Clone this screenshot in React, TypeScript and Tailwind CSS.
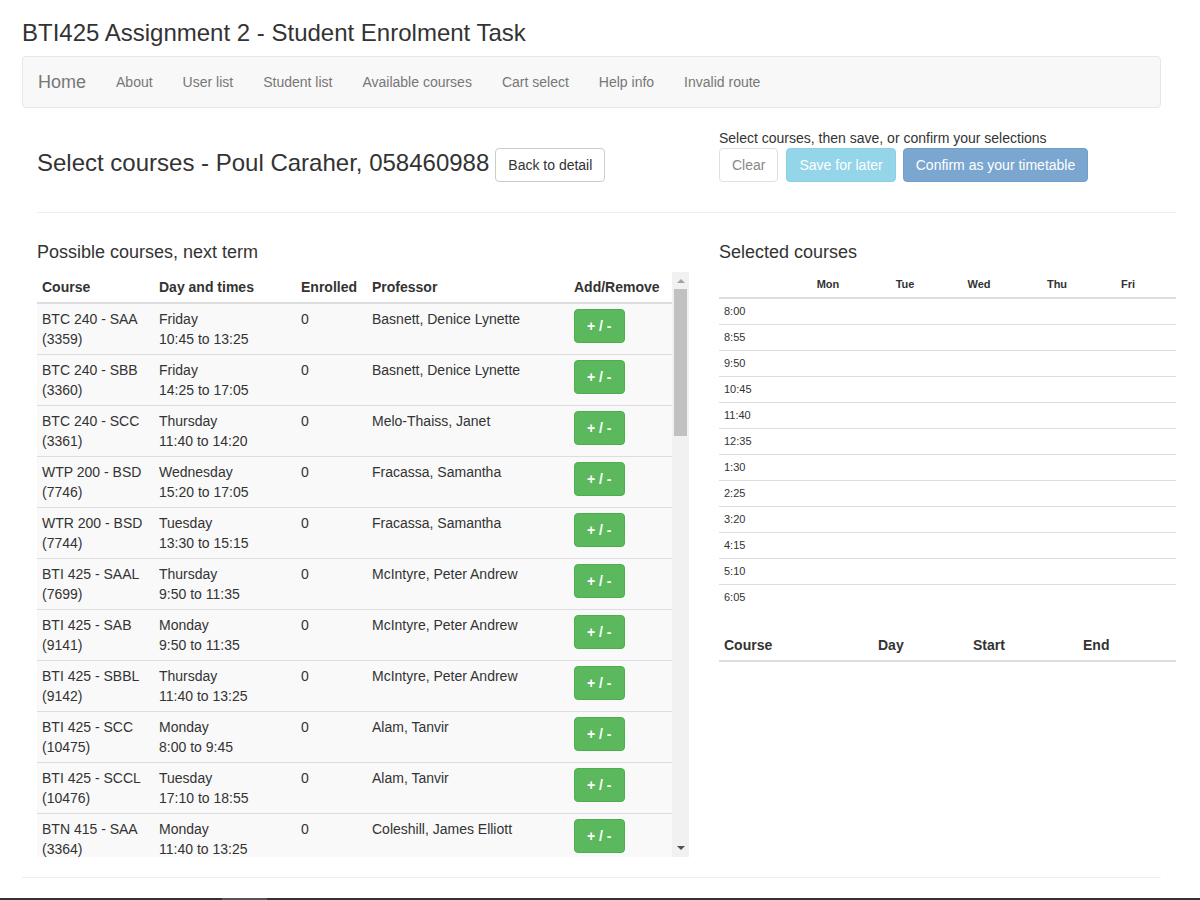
import React from "react";

type Course = {
  code: string;
  id: string;
  day: string;
  times: string;
  enrolled: number;
  prof: string;
};

const courses: Course[] = [
  { code: "BTC 240 - SAA", id: "3359", day: "Friday", times: "10:45 to 13:25", enrolled: 0, prof: "Basnett, Denice Lynette" },
  { code: "BTC 240 - SBB", id: "3360", day: "Friday", times: "14:25 to 17:05", enrolled: 0, prof: "Basnett, Denice Lynette" },
  { code: "BTC 240 - SCC", id: "3361", day: "Thursday", times: "11:40 to 14:20", enrolled: 0, prof: "Melo-Thaiss, Janet" },
  { code: "WTP 200 - BSD", id: "7746", day: "Wednesday", times: "15:20 to 17:05", enrolled: 0, prof: "Fracassa, Samantha" },
  { code: "WTR 200 - BSD", id: "7744", day: "Tuesday", times: "13:30 to 15:15", enrolled: 0, prof: "Fracassa, Samantha" },
  { code: "BTI 425 - SAAL", id: "7699", day: "Thursday", times: "9:50 to 11:35", enrolled: 0, prof: "McIntyre, Peter Andrew" },
  { code: "BTI 425 - SAB", id: "9141", day: "Monday", times: "9:50 to 11:35", enrolled: 0, prof: "McIntyre, Peter Andrew" },
  { code: "BTI 425 - SBBL", id: "9142", day: "Thursday", times: "11:40 to 13:25", enrolled: 0, prof: "McIntyre, Peter Andrew" },
  { code: "BTI 425 - SCC", id: "10475", day: "Monday", times: "8:00 to 9:45", enrolled: 0, prof: "Alam, Tanvir" },
  { code: "BTI 425 - SCCL", id: "10476", day: "Tuesday", times: "17:10 to 18:55", enrolled: 0, prof: "Alam, Tanvir" },
  { code: "BTN 415 - SAA", id: "3364", day: "Monday", times: "11:40 to 13:25", enrolled: 0, prof: "Coleshill, James Elliott" },
];

const times = ["8:00", "8:55", "9:50", "10:45", "11:40", "12:35", "1:30", "2:25", "3:20", "4:15", "5:10", "6:05"];

const navLinks = ["About", "User list", "Student list", "Available courses", "Cart select", "Help info", "Invalid route"];

function FakeScrollbar() {
  return (
    <div className="w-[17px] h-full bg-[#f1f1f1] flex flex-col items-center">
      <div className="h-[17px] w-full flex items-center justify-center">
        <svg width="8" height="5" viewBox="0 0 8 5">
          <path d="M0 5 L4 1 L8 5 Z" fill="#a3a3a3" />
        </svg>
      </div>
      <div className="w-[13px] h-[147px] bg-[#c1c1c1]" />
      <div className="flex-1" />
      <div className="h-[17px] w-full flex items-center justify-center">
        <svg width="8" height="5" viewBox="0 0 8 5">
          <path d="M0 0 L8 0 L4 4 Z" fill="#505050" />
        </svg>
      </div>
    </div>
  );
}

export default function App() {
  return (
    <div className="min-h-[900px] bg-white text-[#333] text-[14px] leading-[20px] font-['Liberation_Sans',Arial,sans-serif]">
      <div className="ml-[22px] w-[1139px] pt-[20px]">
        <h1 className="text-[24px] leading-[26.4px] font-normal mb-[10px]">
          BTI425 Assignment 2 - Student Enrolment Task
        </h1>

        <nav className="h-[52px] border border-[#e7e7e7] bg-[#f8f8f8] rounded-[4px] flex items-center">
          <a className="px-[15px] text-[18px] text-[#777]">Home</a>
          {navLinks.map((l) => (
            <a key={l} className="px-[15px] text-[#777]">
              {l}
            </a>
          ))}
        </nav>

        <div className="ml-[15px] w-[1139px] mt-[19px]">
          {/* header */}
          <div className="flex gap-[30px]">
            <div className="w-[652px] flex items-center mt-[21px] h-[34px]">
              <h2 className="text-[24px] leading-[26px] font-normal -mt-[4px]">
                Select courses - Poul Caraher, 058460988
              </h2>
              <button className="ml-[6px] px-[12px] py-[6px] border border-[#ccc] rounded-[4px] bg-white text-[#333]">
                Back to detail
              </button>
            </div>
            <div className="w-[457px] pt-[1px]">
              <p>Select courses, then save, or confirm your selections</p>
              <div className="flex">
                <button className="px-[12px] py-[6px] border border-[#e0e0e0] rounded-[4px] bg-white text-[#888]">
                  Clear
                </button>
                <button className="ml-[8px] px-[12px] py-[6px] border border-[#8bd0e6] rounded-[4px] bg-[#94d5ea] text-white">
                  Save for later
                </button>
                <button className="ml-[7px] px-[12px] py-[6px] border border-[#6f9fca] rounded-[4px] bg-[#7aa6cf] text-white">
                  Confirm as your timetable
                </button>
              </div>
            </div>
          </div>

          <hr className="mt-[30px] border-0 border-t border-[#eee]" />

          <div className="flex gap-[30px] items-start">
            {/* left column */}
            <div className="w-[652px]">
              <h3 className="text-[18px] leading-[20px] font-normal mt-[29px] mb-[10px]">
                Possible courses, next term
              </h3>
              <div className="h-[585px] flex overflow-hidden">
                <div className="w-[635px] overflow-hidden">
                  <table className="w-[635px] table-fixed border-collapse">
                    <colgroup>
                      <col className="w-[117px]" />
                      <col className="w-[142px]" />
                      <col className="w-[71px]" />
                      <col className="w-[202px]" />
                      <col className="w-[103px]" />
                    </colgroup>
                    <thead>
                      <tr>
                        {["Course", "Day and times", "Enrolled", "Professor", "Add/Remove"].map((h) => (
                          <th
                            key={h}
                            className="text-left font-bold p-[5px] border-b-2 border-[#ddd] align-bottom whitespace-nowrap"
                          >
                            {h}
                          </th>
                        ))}
                      </tr>
                    </thead>
                    <tbody>
                      {courses.map((c) => (
                        <tr key={c.id} className="bg-[#f9f9f9]">
                          <td className="p-[5px] border-t border-[#ddd] align-top">
                            {c.code}
                            <br />({c.id})
                          </td>
                          <td className="p-[5px] border-t border-[#ddd] align-top">
                            {c.day}
                            <br />
                            {c.times}
                          </td>
                          <td className="p-[5px] border-t border-[#ddd] align-top">{c.enrolled}</td>
                          <td className="p-[5px] border-t border-[#ddd] align-top">{c.prof}</td>
                          <td className="p-[5px] border-t border-[#ddd] align-top">
                            <button className="px-[12px] py-[6px] border border-[#4cae4c] rounded-[4px] bg-[#5cb85c] text-white font-bold">
                              + / -
                            </button>
                          </td>
                        </tr>
                      ))}
                    </tbody>
                  </table>
                </div>
                <FakeScrollbar />
              </div>
            </div>

            {/* right column */}
            <div className="w-[457px]">
              <h3 className="text-[18px] leading-[20px] font-normal mt-[29px] mb-[10px]">Selected courses</h3>
              <table className="w-[457px] table-fixed border-collapse text-[11px] leading-[15px]">
                <colgroup>
                  <col className="w-[69px]" />
                  <col className="w-[80px]" />
                  <col className="w-[74px]" />
                  <col className="w-[74px]" />
                  <col className="w-[82px]" />
                  <col className="w-[60px]" />
                  <col className="w-[18px]" />
                </colgroup>
                <thead>
                  <tr>
                    {["", "Mon", "Tue", "Wed", "Thu", "Fri", ""].map((d, i) => (
                      <th key={i} className="text-center font-bold py-[5px] border-b-2 border-[#ddd]">
                        {d}
                      </th>
                    ))}
                  </tr>
                </thead>
                <tbody>
                  {times.map((t) => (
                    <tr key={t}>
                      <td className="px-[5px] py-[5px] border-t border-[#ddd]">{t}</td>
                      <td className="border-t border-[#ddd]" />
                      <td className="border-t border-[#ddd]" />
                      <td className="border-t border-[#ddd]" />
                      <td className="border-t border-[#ddd]" />
                      <td className="border-t border-[#ddd]" />
                      <td className="border-t border-[#ddd]" />
                    </tr>
                  ))}
                </tbody>
              </table>

              <table className="mt-[20px] w-[457px] table-fixed border-collapse">
                <colgroup>
                  <col className="w-[154px]" />
                  <col className="w-[95px]" />
                  <col className="w-[110px]" />
                  <col className="w-[98px]" />
                </colgroup>
                <thead>
                  <tr>
                    {["Course", "Day", "Start", "End"].map((h) => (
                      <th key={h} className="text-left font-bold p-[5px] border-b-2 border-[#ddd]">
                        {h}
                      </th>
                    ))}
                  </tr>
                </thead>
                <tbody />
              </table>
            </div>
          </div>
        </div>

        <hr className="mt-[20px] border-0 border-t border-[#eee]" />
        <div className="h-[20px]" />
      </div>
      <div className="h-[3px] bg-[#333] flex">
        <div className="ml-[222px] w-[45px] bg-[#555]" />
      </div>
    </div>
  );
}
